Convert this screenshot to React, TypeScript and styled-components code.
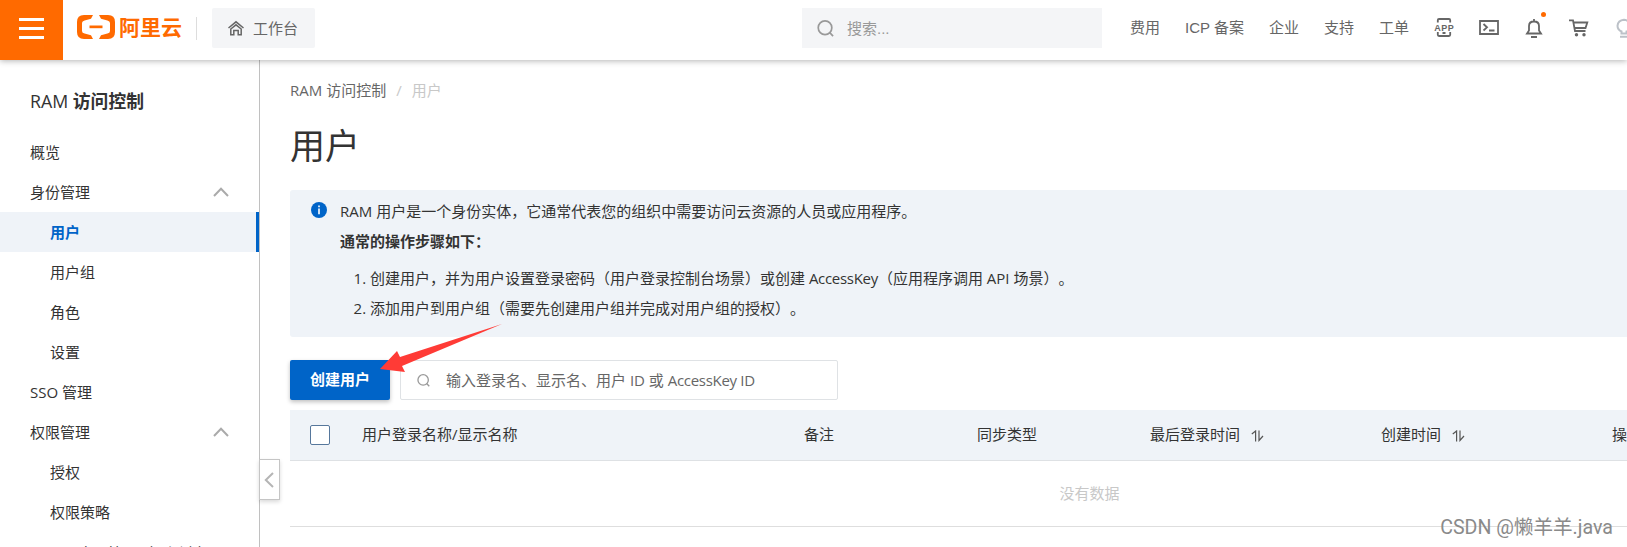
import React from 'react';
import styled, { createGlobalStyle } from 'styled-components';

const Global = createGlobalStyle`
  * { box-sizing: border-box; }
  body { margin: 0; background: #fff; overflow: hidden; }
`;

const Page = styled.div`
  position: relative;
  width: 1627px;
  height: 547px;
  overflow: hidden;
  display: flex;
  flex-direction: column;
  font-family: 'Open Sans', 'Noto Sans CJK SC', sans-serif;
  font-size: 15px;
  color: #333;
`;

const Header = styled.header`
  position: relative;
  z-index: 2;
  flex: none;
  height: 60px;
  display: flex;
  align-items: center;
  background: #fff;
  box-shadow: 0 1px 6px rgba(0, 0, 0, 0.3);
  color: #666;
  font-family: 'Liberation Sans', 'Noto Sans CJK SC', sans-serif;
  > * { flex-shrink: 0; }
`;

const MenuButton = styled.button`
  width: 63px;
  height: 60px;
  padding: 0 0 4px;
  border: 0;
  background: #ff6a00;
  display: flex;
  flex-direction: column;
  align-items: center;
  justify-content: center;
  gap: 6px;
`;

const MenuBar = styled.span`
  width: 25px;
  height: 3px;
  background: #fff;
`;

const Logo = styled.div`
  display: flex;
  align-items: center;
  margin-left: 14px;
  width: 106px;
  color: #ff6a00;
  gap: 4px;
  padding-bottom: 6px;
`;

const LogoText = styled.span`
  font: 700 21px/26px 'Noto Sans CJK SC', sans-serif;
  white-space: nowrap;
  padding-bottom: 2px;
`;

const HeaderRule = styled.span`
  width: 1px;
  height: 23px;
  margin: 0 15px 3px 13px;
  background: #ddd;
`;

const Workbench = styled.div`
  display: flex;
  align-items: center;
  gap: 8px;
  width: 103px;
  height: 40px;
  padding-left: 15px;
  margin-bottom: 4px;
  border-radius: 2px;
  background: #f4f5f7;
`;

const SearchBox = styled.div`
  display: flex;
  align-items: center;
  gap: 13px;
  width: 300px;
  height: 40px;
  margin: 0 28px 4px 487px;
  padding-left: 15px;
  background: #f4f5f7;
  color: #999;
`;

const HeaderLabel = styled.span`
  padding-bottom: 2px;
`;

const TopNav = styled.nav`
  display: flex;
  align-items: center;
  gap: 25px;
  padding-bottom: 8px;
  white-space: nowrap;
`;

const IconRow = styled.div`
  display: flex;
  align-items: center;
  gap: 25px;
  margin-left: 25px;
  padding-bottom: 5px;
  svg { flex: none; }
`;

const BellWrap = styled.span`
  position: relative;
  display: flex;
`;

const Dot = styled.span`
  position: absolute;
  top: -6px;
  right: -2px;
  width: 5px;
  height: 5px;
  border-radius: 50%;
  background: #ff6a00;
`;

const Body = styled.div`
  flex: 1;
  min-height: 0;
  display: flex;
`;

const Sidebar = styled.aside`
  position: relative;
  flex: none;
  width: 260px;
  border-right: 1px solid #c0c0c0;
`;

const SideTitle = styled.h2`
  height: 72px;
  margin: 0;
  padding: 27px 0 0 30px;
  font-size: 17.8px;
  line-height: 28px;
  font-weight: 700;
  span { font-weight: 500; }
`;

const SideItem = styled.div<{ $level?: number; $active?: boolean }>`
  display: flex;
  align-items: center;
  justify-content: space-between;
  height: 40px;
  padding-bottom: ${(p) => (p.$level === 2 ? 0 : 2)}px;
  padding-left: ${(p) => [30, 50, 78][p.$level ?? 0]}px;
  padding-right: ${(p) => (p.$active ? 0 : 30)}px;
  white-space: nowrap;
  svg { margin-top: 2px; }
  ${(p) => p.$active && 'background: #eff3f8; color: #0064c8; font-weight: 700; border-right: 3px solid #0064c8;'}
`;

const Collapse = styled.button`
  position: absolute;
  left: 259px;
  top: 399px;
  width: 21px;
  height: 41px;
  padding: 0 2px 0 0;
  display: flex;
  align-items: center;
  justify-content: center;
  border: 1px solid #c5c5c5;
  background: #fff;
  box-shadow: 0 2px 4px rgba(0, 0, 0, 0.15);
`;

const Main = styled.main`
  flex: none;
  width: 1629px;
  padding: 19px 0 0 30px;
`;

const Breadcrumb = styled.div`
  display: flex;
  gap: 10px;
  line-height: 22px;
  color: #666;
`;

const Faint = styled.span`
  color: #c8c8c8;
`;

const Title = styled.h1`
  margin: 21px 0 0;
  font-size: 35px;
  line-height: 48px;
  font-weight: 400;
`;

const Notice = styled.section`
  display: flex;
  align-items: flex-start;
  height: 147px;
  margin-top: 20px;
  padding: 6px 0 0 21px;
  border-radius: 3px;
  background: #eff3f8;
  gap: 13px;
  > svg { margin-top: 6px; }
`;

const NoticeText = styled.div`
  line-height: 30px;
  text-spacing-trim: space-all;
  p { margin: 0; }
  ol { margin: 7px 0 0; padding-left: 30px; }
`;

const Toolbar = styled.div`
  display: flex;
  gap: 10px;
  margin-top: 23px;
`;

const CreateButton = styled.button`
  width: 100px;
  height: 40px;
  padding: 0 0 4px;
  border: 0;
  border-radius: 2px;
  background: #0064c8;
  color: #fff;
  font: inherit;
  font-weight: 700;
  box-shadow: 0 2px 4px rgba(0, 0, 0, 0.25);
`;

const Filter = styled.div`
  display: flex;
  align-items: center;
  gap: 16px;
  width: 438px;
  height: 40px;
  padding-left: 16px;
  border: 1px solid #dfe2e5;
  border-radius: 2px;
  color: #666;
`;

const FilterHint = styled.span`
  padding-bottom: 2px;
`;

const TightText = styled.span`
  letter-spacing: -0.3px;
`;

const TableHead = styled.div`
  display: grid;
  grid-template-columns: 72px 442px 173px 173px 231px 231px 1fr;
  align-items: center;
  height: 51px;
  margin-top: 10px;
  background: #eff3f8;
  border-bottom: 1px solid #dee1e4;
`;

const Cell = styled.div`
  display: flex;
  align-items: center;
  gap: 11px;
  padding-bottom: 3px;
  svg { margin-top: 5px; }
`;

const Checkbox = styled.span`
  width: 20px;
  height: 20px;
  margin-left: 20px;
  border: 1px solid #56779c;
  border-radius: 2px;
  background: #fff;
`;

const Empty = styled.div`
  height: 66px;
  border-bottom: 1px solid #dedede;
  line-height: 64px;
  text-align: center;
  color: #c8c8c8;
`;

const Arrow = styled.svg`
  position: absolute;
  left: 380px;
  top: 323px;
  z-index: 3;
`;

const Watermark = styled.div`
  position: absolute;
  right: 14px;
  bottom: 5px;
  font: 19.6px/28px Roboto, 'Noto Sans CJK SC', sans-serif;
  color: #8a8a8a;
`;

const Chevron = () => (
  <svg width="16" height="10" viewBox="0 0 16 10" fill="none" stroke="#aaa" strokeWidth="2">
    <path d="M1 9L8 1.8L15 9" />
  </svg>
);

const SortIcon = () => (
  <svg width="13" height="12" viewBox="0 0 13 12" fill="none" stroke="#555" strokeWidth="1.2">
    <path d="M.8 4L4.6 1V11.5M8 .5V10.5L12 6" />
  </svg>
);

const Magnifier = ({ size }: { size: number }) => (
  <svg width={size} height={size} viewBox="0 0 18 18" fill="none" stroke="#999" strokeWidth="1.8">
    <circle cx="8.5" cy="8.2" r="7.2" />
    <path d="M13.3 13.1L17 17" />
  </svg>
);

const LogoMark = () => (
  <svg width="38" height="24" viewBox="0 0 38 24" fill="#ff6a00">
    <path d="M16 0H7Q0 0 0 7V17Q0 24 7 24H16L14 20.2L7.6 18.6Q5 18 5 16V8Q5 6 7.6 5.4L14 3.8Z" />
    <path d="M22 0H31Q38 0 38 7V17Q38 24 31 24H22L24 20.2L30.4 18.6Q33 18 33 16V8Q33 6 30.4 5.4L24 3.8Z" />
    <path d="M12.5 10.5H25.5V13.2H12.5Z" />
  </svg>
);

const items: { text: string; level?: number; active?: boolean; open?: boolean }[] = [
  { text: '概览' },
  { text: '身份管理', open: true },
  { text: '用户', level: 1, active: true },
  { text: '用户组', level: 1 },
  { text: '角色', level: 1 },
  { text: '设置', level: 1 },
  { text: 'SSO 管理' },
  { text: '权限管理', open: true },
  { text: '授权', level: 1 },
  { text: '权限策略', level: 1 },
  { text: '应用管理（公测中）', level: 2 },
];

export default function App() {
  return (
    <Page>
      <Global />
      <Header>
        <MenuButton aria-label="菜单">
          <MenuBar /><MenuBar /><MenuBar />
        </MenuButton>
        <Logo><LogoMark /><LogoText>阿里云</LogoText></Logo>
        <HeaderRule />
        <Workbench>
          <svg width="18" height="16" viewBox="0 0 18 16" fill="none" stroke="#666" strokeWidth="1.5">
            <path d="M1.5 8L9 1.8L16.5 8M3.8 9V14.8H6.8V10.5H11.2V14.8H14.2V9L9 4.8Z" />
          </svg>
          <HeaderLabel>工作台</HeaderLabel>
        </Workbench>
        <SearchBox><Magnifier size={17} /><HeaderLabel>搜索...</HeaderLabel></SearchBox>
        <TopNav>
          <span>费用</span><span>ICP 备案</span><span>企业</span><span>支持</span><span>工单</span>
        </TopNav>
        <IconRow>
          <svg width="20" height="19" viewBox="0 0 20 19" fill="none" stroke="#666" strokeWidth="1.8">
            <path d="M3.8 4.5V2.2Q3.8 1 5 1H15Q16.2 1 16.2 2.2V4.5M3.8 14V16.8Q3.8 18 5 18H15Q16.2 18 16.2 16.8V14M8.5 15H11.5" />
            <text x="0.3" y="12.6" textLength="19.4" fontSize="9" fontWeight="700" stroke="none" fill="#666">APP</text>
          </svg>
          <svg width="20" height="15" viewBox="0 0 20 15" fill="none" stroke="#666" strokeWidth="1.8">
            <path d="M1 1H19V14H1ZM4.5 4L8 7.3L4.5 10.5M10 10.5H15.5" />
          </svg>
          <BellWrap>
            <svg width="20" height="20" viewBox="0 0 20 20" fill="none" stroke="#666" strokeWidth="1.8">
              <path d="M3 15.5H17L15 12.5V8Q15 3.5 10 3.5Q5 3.5 5 8V12.5ZM10 1V3.5M7 19H13" />
            </svg>
            <Dot />
          </BellWrap>
          <svg width="20" height="18" viewBox="0 0 20 18" fill="none" stroke="#666" strokeWidth="1.8">
            <path d="M0 1.3H4L6 12H16.5M4.5 3.5H18.3L16.5 9H5.5" />
            <circle cx="7.5" cy="15.8" r="1.7" fill="#666" stroke="none" />
            <circle cx="15" cy="15.8" r="1.7" fill="#666" stroke="none" />
          </svg>
          <svg width="20" height="20" viewBox="0 0 20 20" fill="none" stroke="#bcc1c8" strokeWidth="2">
            <path d="M7.5 15.5V13.5Q3.5 11.8 3.5 7.8Q4 2.3 10 1.8Q16 2.3 16.5 7.8Q16.5 11.8 12.5 13.5V15.5ZM6 18.8H14" />
          </svg>
        </IconRow>
      </Header>
      <Body>
        <Sidebar>
          <SideTitle><span>RAM</span> 访问控制</SideTitle>
          {items.map((i) => (
            <SideItem key={i.text} $level={i.level} $active={i.active}>
              {i.text}
              {i.open && <Chevron />}
            </SideItem>
          ))}
          <Collapse aria-label="收起">
            <svg width="10" height="16" viewBox="0 0 10 16" fill="none" stroke="#b5b5b5" strokeWidth="2">
              <path d="M9 1L1.8 8L9 15" />
            </svg>
          </Collapse>
        </Sidebar>
        <Main>
          <Breadcrumb><span>RAM 访问控制</span><Faint>/</Faint><Faint>用户</Faint></Breadcrumb>
          <Title>用户</Title>
          <Notice>
            <svg width="16" height="16" viewBox="0 0 16 16">
              <circle cx="8" cy="8" r="8" fill="#0064c8" />
              <path d="M8 3.5V5.2M8 6.5V12.3" stroke="#fff" strokeWidth="1.6" />
            </svg>
            <NoticeText>
              <p>RAM 用户是一个身份实体，它通常代表您的组织中需要访问云资源的人员或应用程序。</p>
              <p><b>通常的操作步骤如下：</b></p>
              <ol>
                <li>创建用户，并为用户设置登录密码（用户登录控制台场景）或创建 <TightText>AccessKey</TightText>（应用程序调用 API 场景）。</li>
                <li>添加用户到用户组（需要先创建用户组并完成对用户组的授权）。</li>
              </ol>
            </NoticeText>
          </Notice>
          <Toolbar>
            <CreateButton>创建用户</CreateButton>
            <Filter>
              <Magnifier size={13} />
              <FilterHint>输入登录名、显示名、用户 ID 或 <TightText>AccessKey ID</TightText></FilterHint>
            </Filter>
          </Toolbar>
          <TableHead>
            <Checkbox />
            <Cell>用户登录名称/显示名称</Cell>
            <Cell>备注</Cell>
            <Cell>同步类型</Cell>
            <Cell>最后登录时间<SortIcon /></Cell>
            <Cell>创建时间<SortIcon /></Cell>
            <Cell>操作</Cell>
          </TableHead>
          <Empty>没有数据</Empty>
        </Main>
      </Body>
      <Arrow width="124" height="50" viewBox="0 0 124 50">
        <path d="M122 1L20 34L17 28L0 46L25 49L22 43Z" fill="#ff3b36" />
      </Arrow>
      <Watermark>CSDN @懒羊羊.java</Watermark>
    </Page>
  );
}
